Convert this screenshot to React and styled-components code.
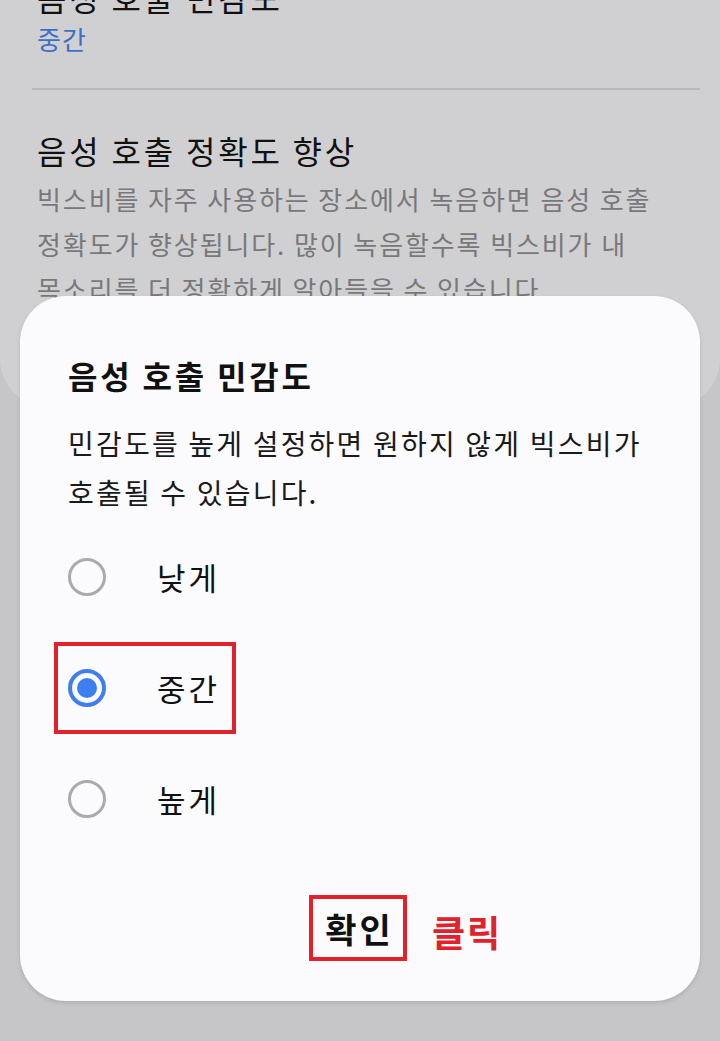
import React from 'react'
import styled, { createGlobalStyle } from 'styled-components'

const Global = createGlobalStyle`
  html, body { margin: 0; padding: 0; }
  body {
    width: 720px;
    height: 1041px;
    overflow: hidden;
    background: #c6c6c8;
    font-family: "Noto Sans CJK KR", "Noto Sans", sans-serif;
  }
`

const Screen = styled.div`
  position: relative;
  width: 720px;
  height: 1041px;
  overflow: hidden;
  background: #c6c6c8;
`

const BackCard = styled.div`
  background: #d0d0d2;
  height: 432px;
  border-radius: 0 0 48px 48px;
  padding: 0 20px 0 32px;
  box-sizing: border-box;
`

const SettingItem = styled.div`
  padding: ${p => p.$pad || '0'};
  padding-left: 5px;
`

const ItemTitle = styled.div`
  font-size: 32px;
  color: #111;
  line-height: 44px;
  letter-spacing: 2.8px;
  white-space: nowrap;
`

const ItemValue = styled.div`
  font-size: 26px;
  color: #3e6fc4;
  line-height: 40px;
  letter-spacing: 1px;
`

const ItemDesc = styled.div`
  margin-top: 4px;
  font-size: 26px;
  color: #78787a;
  line-height: 45px;
  letter-spacing: 1.9px;
  white-space: nowrap;
`

const Divider = styled.div`
  height: 2px;
  background: #b9b9bb;
`

const Dialog = styled.div`
  position: absolute;
  left: 20px;
  top: 296px;
  width: 680px;
  height: 705px;
  background: #fbfbfd;
  border-radius: 46px;
  box-shadow: 0 2px 4px rgba(0, 0, 0, 0.12);
  padding: 57px 48px 0;
  box-sizing: border-box;
  display: flex;
  flex-direction: column;
`

const DialogTitle = styled.div`
  font-size: 32px;
  font-weight: 700;
  color: #111;
  line-height: 44px;
  letter-spacing: 2.8px;
`

const DialogDesc = styled.div`
  margin-top: 22px;
  font-size: 28px;
  color: #1a1a1a;
  line-height: 49px;
  letter-spacing: 2.2px;
  white-space: nowrap;
`

const Options = styled.div`
  margin-top: 4px;
  display: flex;
  flex-direction: column;
`

const Option = styled.div`
  position: relative;
  height: 111px;
  display: flex;
  align-items: center;
  gap: 51px;
`

const Radio = styled.div`
  flex: none;
  width: 38px;
  height: 38px;
  border-radius: 50%;
  box-sizing: border-box;
  border: ${p => (p.$on ? '4px solid #3d7ef0' : '3px solid #ababad')};
  display: flex;
  align-items: center;
  justify-content: center;
  &::after {
    content: '';
    display: ${p => (p.$on ? 'block' : 'none')};
    width: 20px;
    height: 20px;
    border-radius: 50%;
    background: #3d7ef0;
  }
`

const OptionLabel = styled.div`
  font-size: 31px;
  color: #111;
  letter-spacing: 3px;
`

const Highlight = styled.div`
  position: absolute;
  left: -14px;
  top: 10px;
  width: 182px;
  height: 92px;
  border: 4px solid #e2222b;
  box-sizing: border-box;
  pointer-events: none;
`

const Footer = styled.div`
  margin-top: auto;
  margin-bottom: 40px;
  display: flex;
  align-items: center;
  gap: 25px;
  padding-left: 241px;
`

const OkButton = styled.div`
  border: 4px solid #e2222b;
  width: 98px;
  height: 66px;
  box-sizing: border-box;
  display: flex;
  align-items: center;
  justify-content: center;
  font-size: 34px;
  font-weight: 700;
  color: #111;
  letter-spacing: 3px;
  text-indent: 3px;
`

const Note = styled.div`
  font-size: 36px;
  font-weight: 700;
  color: #e2222b;
  letter-spacing: 2px;
  margin-top: 6px;
`

const options = [
  { label: '낮게', on: false },
  { label: '중간', on: true },
  { label: '높게', on: false },
]

export default function App() {
  return (
    <Screen>
      <Global />
      <BackCard>
        <SettingItem>
          <ItemTitle style={{ marginTop: '-25px' }}>음성 호출 민감도</ItemTitle>
          <ItemValue>중간</ItemValue>
        </SettingItem>
        <Divider style={{ marginTop: '29px' }} />
        <SettingItem $pad="38px 0 0">
          <ItemTitle>음성 호출 정확도 향상</ItemTitle>
          <ItemDesc>
            빅스비를 자주 사용하는 장소에서 녹음하면 음성 호출
            <br />
            정확도가 향상됩니다. 많이 녹음할수록 빅스비가 내
            <br />
            목소리를 더 정확하게 알아들을 수 있습니다.
          </ItemDesc>
        </SettingItem>
      </BackCard>

      <Dialog>
        <DialogTitle>음성 호출 민감도</DialogTitle>
        <DialogDesc>
          민감도를 높게 설정하면 원하지 않게 빅스비가
          <br />
          호출될 수 있습니다.
        </DialogDesc>
        <Options>
          {options.map(o => (
            <Option key={o.label}>
              <Radio $on={o.on} />
              <OptionLabel>{o.label}</OptionLabel>
              {o.on && <Highlight />}
            </Option>
          ))}
        </Options>
        <Footer>
          <OkButton>확인</OkButton>
          <Note>클릭</Note>
        </Footer>
      </Dialog>
    </Screen>
  )
}
